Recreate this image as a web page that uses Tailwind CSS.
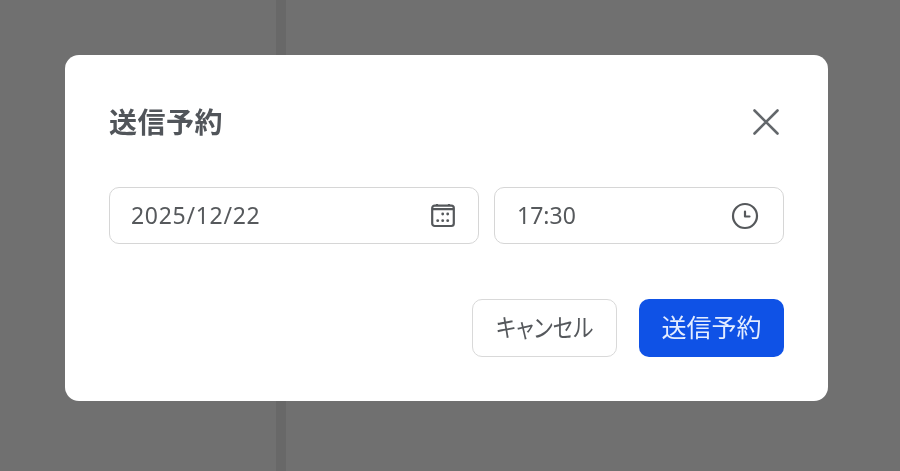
<!DOCTYPE html>
<html lang="ja">
<head>
    <meta charset="UTF-8">
    <title>送信予約</title>
    <script src="https://cdn.jsdelivr.net/npm/@tailwindcss/browser@4"></script>
</head>
<body class="font-['Noto_Sans','Noto_Sans_CJK_JP',sans-serif] bg-[#707070]">
    <div class="relative w-[900px] h-[471px] overflow-hidden pt-[55px] pl-[65px] blur-[0.5px]">
        <!-- page behind the overlay -->
        <div class="absolute left-[276px] top-0 w-[10px] h-full bg-[#686868]"></div>

        <div class="relative w-[763px] h-[346px] bg-white rounded-[14px] px-[44px] pt-[44px]">
            <div class="flex justify-between items-center h-[46px]">
                <h2 class="text-[28px] tracking-[0.5px] font-bold text-[#51555a] leading-none">送信予約</h2>
                <button class="mr-[3px] text-[#63676b]">
                    <svg class="w-[30px] h-[30px]" fill="none" stroke="currentColor" stroke-width="2.6" stroke-linecap="round" viewBox="0 0 30 30"><path d="M3.5 3.5l23 23M26.5 3.5l-23 23"></path></svg>
                </button>
            </div>

            <div class="flex gap-[15px] mt-[42px]">
                <div class="w-[370px] h-[57px] flex items-center justify-between border border-[#d6d6d6] rounded-[10px] pl-[21px] pr-[22px]">
                    <span class="text-[23px] tracking-[0.7px] text-[#56595c]">2025/12/22</span>
                    <svg class="w-[26px] h-[26px] text-[#55585b]" fill="none" stroke="currentColor" stroke-width="2.2" viewBox="0 0 26 26">
                        <rect x="2.2" y="2.6" width="21.6" height="20.4" rx="2.5"></rect>
                        <path d="M2.2 6.2h21.6M7 1v2M19 1v2"></path>
                        <g fill="currentColor" stroke="none">
                            <circle cx="12.7" cy="11" r="1.4"></circle>
                            <circle cx="17.7" cy="11" r="1.4"></circle>
                            <circle cx="7.7" cy="17.7" r="1.4"></circle>
                            <circle cx="12.7" cy="17.7" r="1.4"></circle>
                            <circle cx="17.7" cy="17.7" r="1.4"></circle>
                        </g>
                    </svg>
                </div>
                <div class="w-[290px] h-[57px] flex items-center justify-between border border-[#d6d6d6] rounded-[10px] pl-[22px] pr-[24px]">
                    <span class="text-[23px] text-[#56595c]">17:30</span>
                    <svg class="w-[28px] h-[28px] text-[#55585b]" fill="none" stroke="currentColor" stroke-width="2.2" stroke-linecap="round" stroke-linejoin="round" viewBox="0 0 28 28">
                        <circle cx="14" cy="14" r="12"></circle>
                        <path d="M14 9.5V14.5H18.5"></path>
                    </svg>
                </div>
            </div>

            <div class="flex justify-end gap-[22px] mt-[55px]">
                <button class="w-[145px] h-[58px] border border-[#d9d9d9] rounded-[10px] bg-white text-[25px] font-normal text-[#55585c] [font-feature-settings:'palt']"><span class="inline-block scale-x-[0.86]">キャンセル</span></button>
                <button class="w-[145px] h-[58px] rounded-[10px] bg-[#0f52e6] text-[25px] font-normal text-[#e4edff]">送信予約</button>
            </div>
        </div>
    </div>
</body>
</html>
